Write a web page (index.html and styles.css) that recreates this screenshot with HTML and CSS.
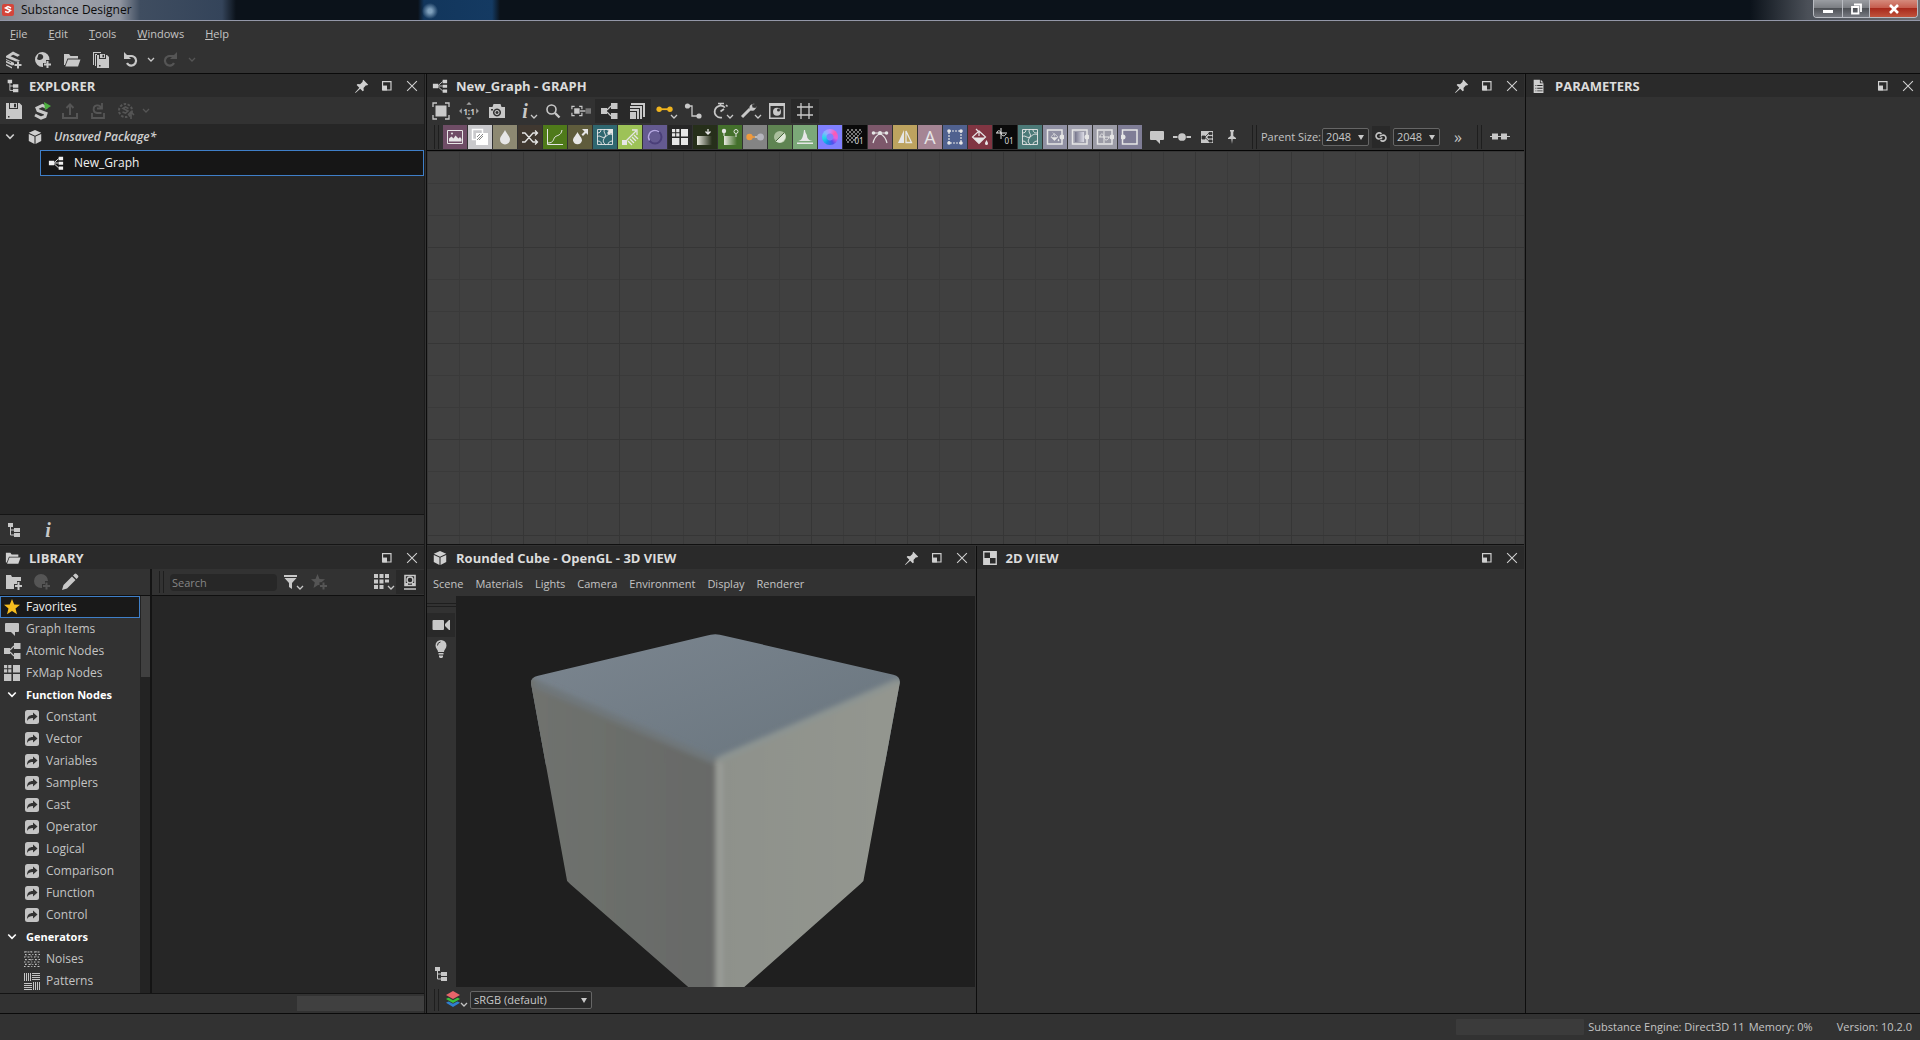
FILE: index.html
```html
<!DOCTYPE html>
<html lang="en">
<head>
<meta charset="utf-8">
<title>Substance Designer</title>
<link rel="stylesheet" href="styles.css">
</head>
<body>
<svg class="sprite" aria-hidden="true">
  <defs>
    <linearGradient id="g-dark"><stop offset="0" stop-color="#e8e8e0"/><stop offset="1" stop-color="#262f1a"/></linearGradient>
    <linearGradient id="g-green"><stop offset="0" stop-color="#e8e8e0"/><stop offset="1" stop-color="#44702c"/></linearGradient>
    <linearGradient id="g-gray"><stop offset="0" stop-color="#77778c"/><stop offset="1" stop-color="#dcdce6"/></linearGradient>
    <pattern id="checks" width="4" height="4" patternUnits="userSpaceOnUse"><path d="M0 0h2v2H0zM2 2h2v2H2z" fill="#777"/></pattern>
  </defs>
  <symbol id="i-chev" viewBox="0 0 8 8"><path d="M1 2l3 3 3-3" fill="none" stroke="currentColor" stroke-width="1.3"/></symbol>
  <symbol id="i-s" viewBox="0 0 18 18"><path d="M14.500 6L9.500 3.500 4 6l1 2.500 8 3-1 3-4 1.500-6-3" fill="none" stroke="currentColor" stroke-width="3"/></symbol>
  <symbol id="i-newsub" viewBox="0 0 18 18"><path d="M1 5l7-4.500L15 4l-2.500 1.700-4.300-2L5.500 5.300l9.500 4.200-1 .8-3 .2-10-4zM1 8l8 3.700V14l-2 .5L1 11.500v-1.700l5 2.200v-.8L1 9zM1 13l6 3v1.500L1 14.500z" fill="currentColor"/><path d="M13 10.500v7M9.500 14h7" stroke="currentColor" stroke-width="2"/></symbol>
  <symbol id="i-newres" viewBox="0 0 18 18"><path d="M8.500 1a7.500 7.500 0 1 0 0 15h.5v-4h3V9h3.500A7.500 7.500 0 0 0 8.500 1zM4.500 3.200a3.500 3 0 1 1 1.500 5.800 3.500 3.500 0 0 1-3-1z" fill="currentColor" fill-rule="evenodd"/><path d="M13.500 10v7M10 13.500h7" stroke="currentColor" stroke-width="2"/></symbol>
  <symbol id="i-newfilter" viewBox="0 0 18 18"><path d="M8 1a7 7 0 1 0 0 14h1v-4h3V8h3A7 7 0 0 0 8 1z" fill="currentColor"/><path d="M13.500 9.500v7M10 13h7" stroke="currentColor" stroke-width="2"/></symbol>
  <symbol id="i-folder" viewBox="0 0 18 18"><path d="M1 3h5l1.500 2H15v2.500H4.500L2 14H1z" fill="currentColor"/><path d="M5 8.500h12.500L15 15.500H2.300z" fill="currentColor"/></symbol>
  <symbol id="i-save" viewBox="0 0 18 18"><path d="M1 1h3v6h9V1h1.500L17 3.500V17H1zM3 14v1.500h1.500V14z" fill="currentColor" fill-rule="evenodd"/><path d="M5 1h7v5H5zm4 .8v3.400h2V1.800z" fill="currentColor" fill-rule="evenodd"/></symbol>
  <symbol id="i-saveall" viewBox="0 0 18 18"><path d="M1 1h8v1H2v12H1zM3 3h2v1H4v11H3z" fill="currentColor"/><path d="M5 4h2v4h7V4h1l2 2v11H5zM7 14h1.500v1.500H7z" fill="currentColor" fill-rule="evenodd"/><path d="M8 3h5v4H8zm2.500.8v2.400h1.500V3.800z" fill="currentColor" fill-rule="evenodd"/></symbol>
  <symbol id="i-undo" viewBox="0 0 18 18"><path d="M6 5h4.500a4.800 4.800 0 1 1-4.500 7" fill="none" stroke="currentColor" stroke-width="2.200"/><path d="M3 1v7h7L7.500 5.500z" fill="currentColor"/></symbol>
  <symbol id="i-tree" viewBox="0 0 18 18"><path d="M3 2h5v4H3zM9 7h6v4H9zM9 12h6v4H9z" fill="currentColor"/><path d="M5.500 5v9H10M5.500 9H10" fill="none" stroke="currentColor"/></symbol>
  <symbol id="i-pin" viewBox="0 0 18 18"><path d="M10.500 2L16 7.500l-1.500 1-1-.3-2.800 3 .3 2.800-1.200 1L7 12l-5 4.500L1 17l.5-1L6 11 3 8l1-1.200 2.800.3 3-2.800-.3-1z" fill="currentColor"/></symbol>
  <symbol id="i-float" viewBox="0 0 18 18"><path d="M4 4h9.500v9.500H4z" fill="none" stroke="currentColor" stroke-width="1.300"/><path d="M4 8.500h5V14H4z" fill="currentColor"/></symbol>
  <symbol id="i-close" viewBox="0 0 18 18"><path d="M3.500 3.500l11 11M14.500 3.500l-11 11" stroke="currentColor" stroke-width="1.200"/></symbol>
  <symbol id="i-export" viewBox="0 0 18 18"><path d="M2 11v5h14v-5M9 13V3M5.500 6L9 2.500 12.500 6" fill="none" stroke="currentColor" stroke-width="2"/></symbol>
  <symbol id="i-reload" viewBox="0 0 18 18"><path d="M3 11v5h12v-5M12.500 11H8a3.800 3.800 0 1 1 4-5M13 1v5.500H8" fill="none" stroke="currentColor" stroke-width="1.800"/></symbol>
  <symbol id="i-gear" viewBox="0 0 18 18"><circle cx="8.500" cy="8.500" r="6.500" fill="none" stroke="currentColor" stroke-width="2" stroke-dasharray="2.500 1.500"/><path d="M11.500 6.500L8.500 5 6 6.500l5 2.500-2.500 2L5.500 10M14 10v7M11 13l3-3 3 3" fill="none" stroke="currentColor" stroke-width="1.600"/></symbol>
  <symbol id="i-cube" viewBox="0 0 18 18"><path d="M9 1l7 3.200L9 7.500 2 4.200zM2 5.500l6.400 3V17L2 13.500zM16 5.500l-6.400 3V17l6.400-3.500z" fill="currentColor"/></symbol>
  <symbol id="i-graph" viewBox="0 0 18 18"><path d="M1 6.500h6v5H1zM12 2h5v4h-5zM12 7.500h5v3.500h-5zM12 13h5v3.500h-5z" fill="currentColor"/><path d="M12 4L7 8.500M7 9h5M7 10l5 4.500" stroke="currentColor"/></symbol>
  <symbol id="i-nodes" viewBox="0 0 18 18"><path d="M1 6h6v6H1zM11 1h6.500v6H11zM11 11h6.500v6H11z" fill="currentColor"/><path d="M11 4L7 8M7 10l4 4" stroke="currentColor" stroke-width="1.200"/></symbol>
  <symbol id="i-doc" viewBox="0 0 18 18"><path d="M3 2h7v4h4v11H3zM5 8v1h1V8zM7 8v1h6V8zM5 11v1h1v-1zM7 11v1h6v-1zM5 14v1h1v-1zM7 14v1h6v-1z" fill="currentColor" fill-rule="evenodd"/><path d="M11 2l3 3h-3z" fill="currentColor"/></symbol>
  <symbol id="i-check2d" viewBox="0 0 18 18"><path d="M2 2h14v14H2z" fill="none" stroke="currentColor" stroke-width="1.500"/><path d="M9 2h7v7H9zM2 9h7v7H2z" fill="currentColor"/></symbol>
  <symbol id="i-fit" viewBox="0 0 18 18"><path d="M3.500 3.500h11v11h-11z" fill="currentColor"/><path d="M1 5V1h4M13 1h4v4M17 13v4h-4M5 17H1v-4" fill="none" stroke="currentColor" stroke-width="1.300"/></symbol>
  <symbol id="i-cam" viewBox="0 0 18 18"><path d="M5.500 2h7l1 3H17v11H1V5h3.500zM3 7v1.500h2V7zM9 6.500a4 4 0 1 0 .01 0zM9 8a2.500 2.500 0 1 1-.01 0zM9 9a1.500 1.500 0 1 0 .01 0z" fill="currentColor" fill-rule="evenodd"/></symbol>
  <symbol id="i-zoom" viewBox="0 0 18 18"><circle cx="7.500" cy="7.500" r="4.500" fill="none" stroke="currentColor" stroke-width="1.600"/><path d="M11 11l4.500 4.500" stroke="currentColor" stroke-width="2.400"/></symbol>
  <symbol id="i-link" viewBox="0 0 22 18"><path d="M4 4H1v3M1 11v3h3M9 4h3v3M12 11v3H9" fill="none" stroke="currentColor" stroke-width="1.300"/><path d="M3.500 6h6v6h-6z" fill="currentColor"/><path d="M10 9h6" stroke="currentColor" stroke-width="1.500"/><path d="M16 6h6v6h-6z" fill="#777"/></symbol>
  <symbol id="i-stack" viewBox="0 0 18 18"><path d="M3 1h14v14h-2V3H3zM2 4h12v13h-2V6H2zM2 7h9v10H9V9H2zM2 10h6v7H2z" fill="currentColor"/></symbol>
  <symbol id="i-wire" viewBox="0 0 20 18"><path d="M3 7h14" stroke="#f0b41e" stroke-width="2"/><circle cx="3.500" cy="7" r="3" fill="#f0b41e"/><circle cx="15.500" cy="7" r="3" fill="#f0b41e"/></symbol>
  <symbol id="i-elbow" viewBox="0 0 18 18"><path d="M3 4h5v10h7" fill="none" stroke="currentColor" stroke-width="1.300"/><circle cx="3.500" cy="4" r="2.600" fill="currentColor"/><circle cx="15" cy="14" r="2.600" fill="currentColor"/></symbol>
  <symbol id="i-timer" viewBox="0 0 18 18"><path d="M13 5.500A6 6 0 1 0 10 15.500M6 1.500h6M8.500 2v2M14 3l1.500 1.500M8.500 9.500L12 7" fill="none" stroke="currentColor" stroke-width="1.700"/></symbol>
  <symbol id="i-wrench" viewBox="0 0 18 18"><path d="M2 15l8-8" stroke="currentColor" stroke-width="3"/><path d="M15 2l-3 .5.500 3 3 .5 1-2a4.500 4.500 0 0 1-7 4 4.500 4.500 0 0 1 5.500-6z" fill="currentColor"/></symbol>
  <symbol id="i-preview" viewBox="0 0 18 18"><path d="M1 1h16v16H1zM2.500 4v11.500h13V4z" fill="currentColor" fill-rule="evenodd"/><circle cx="9" cy="9.800" r="4" fill="currentColor"/><circle cx="10.500" cy="8" r="1.500" fill="#323232"/></symbol>
  <symbol id="i-grid" viewBox="0 0 18 18"><path d="M5 1v16M13 1v16M1 5h16M1 13h16" stroke="currentColor" stroke-width="1.300"/></symbol>
  <symbol id="i-img" viewBox="0 0 18 18"><path d="M1.500 2.500h15v13h-15z" fill="none" stroke="currentColor"/><path d="M3 13.500v-3l2.500-2 2 2 2-3 3 3 1.500-1.500 1.500 2v2.500z" fill="currentColor"/><circle cx="6" cy="5.500" r="1" fill="currentColor"/></symbol>
  <symbol id="i-blend" viewBox="0 0 18 18"><path d="M1.500 1.500h10v10h-10z" fill="none" stroke="#fff" stroke-width="1.500"/><path d="M5 5h12v12H5z" fill="#fff"/><path d="M6 9l3-3M6 12l6-6M8 12l4-4" stroke="#888"/></symbol>
  <symbol id="i-drop" viewBox="0 0 18 18"><path d="M9 2c2 4 5 6.500 5 9.500a5 5 0 0 1-10 0C4 8.500 7 6 9 2z" fill="currentColor"/></symbol>
  <symbol id="i-shuffle" viewBox="0 0 18 18"><path d="M1 5h3l8 9h4M1 14h3l8-9h4M14 2.500L16.500 5 14 7.500M14 11.500l2.500 2.500-2.500 2.500" fill="none" stroke="currentColor" stroke-width="1.300"/></symbol>
  <symbol id="i-curve" viewBox="0 0 18 18"><path d="M1.500 1v15.500H17M2 15c6 0 5-4 7-6s6-1 7-7" fill="none" stroke="currentColor"/></symbol>
  <symbol id="i-dropdir" viewBox="0 0 18 18"><path d="M6.500 4c2 4 4.500 5.500 4.500 8.500a4.600 4.600 0 0 1-9 0c0-3 2.500-4.500 4.500-8.500zM11 1h6v6l-2-2-3 3-1.500-1.500 3-3z" fill="currentColor"/></symbol>
  <symbol id="i-warp" viewBox="0 0 18 18"><path d="M1.500 1.500h15v15h-15zM1 9c3-3 5 2 8 0s4-4 8-2M9 1c-3 3 2 5 0 8s-3 5 1 8M1 5c3 0 4-1 4-4M5 17c1-3-1-4-4-4M12 17c0-3 2-4 5-4M12 1c0 3 1 4 5 4" fill="none" stroke="currentColor" stroke-width=".9"/></symbol>
  <symbol id="i-arrowne" viewBox="0 0 18 18"><path d="M11 1h6v6l-2-2-2 2-2-2 2-2z" fill="currentColor"/></symbol>
  <symbol id="i-dist" viewBox="0 0 18 18"><path d="M2 16L15 3M11 2h5v5M7 13l4 4M9 11l4 4M11 9l4 4M13 7l4 4" fill="none" stroke="currentColor" stroke-width="1.300"/><path d="M1 12h5v5H1z" fill="currentColor"/></symbol>
  <symbol id="i-ring" viewBox="0 0 18 18"><circle cx="9" cy="9" r="6.500" fill="none" stroke="#4a3f78" stroke-width="2"/><path d="M3.500 12.500A6.500 6.500 0 0 1 9 2.500a6.500 6.500 0 0 1 4 1.400" fill="none" stroke="#b5a8e0" stroke-width="1.500"/></symbol>
  <symbol id="i-fx" viewBox="0 0 18 18"><path d="M1 1h3.200v3.200H1zM5.200 1h3.200v3.200H5.200zM1 5.200h3.200v3.200H1zM5.200 5.200h3.200v3.200H5.200zM10 1h7v7.400h-7zM1 10h7.400v7H1zM10 10h7v7h-7z" fill="currentColor"/></symbol>
  <symbol id="i-grad" viewBox="0 0 18 18"><path d="M1 8h15v9H1z" fill="url(#g-dark)"/><path d="M12 1v5M9.500 3.500L12 6l2.500-2.500" fill="none" stroke="currentColor" stroke-width="1.300"/></symbol>
  <symbol id="i-graddyn" viewBox="0 0 18 18"><path d="M3 8h13v9H3z" fill="url(#g-green)"/><circle cx="3" cy="3" r="2.200" fill="currentColor"/><path d="M3 4v4M15 6v3" stroke="currentColor"/><circle cx="15" cy="3.500" r="2" fill="none" stroke="currentColor"/></symbol>
  <symbol id="i-swap" viewBox="0 0 18 18"><path d="M4 9h5" stroke="#f09a3c" stroke-width="1.500"/><path d="M9 9h5" stroke="#ccc" stroke-width="1.500"/><circle cx="3.500" cy="9" r="3.200" fill="#f09a3c"/><circle cx="14.500" cy="9" r="3.500" fill="#b4b4bc"/></symbol>
  <symbol id="i-half" viewBox="0 0 18 18"><circle cx="9" cy="9" r="6" fill="#aabf9c"/><path d="M4.800 13.200A6 6 0 0 0 13.200 4.800z" fill="#dfe8d8"/><path d="M13.200 4.800L4.800 13.200" stroke="#47663c"/></symbol>
  <symbol id="i-hist" viewBox="0 0 18 18"><path d="M1 13c4 0 6-2 7-11h1c0 3 2 4 2 6s2 5 6 5zM1 14.500h16V16H1z" fill="currentColor"/></symbol>
  <symbol id="i-bez" viewBox="0 0 18 18"><path d="M2 5h14M2 15c1-4 4-8 7-9.500M16 15c-1-4-4-8-7-9.500" fill="none" stroke="currentColor" stroke-width="1.200"/><circle cx="2.500" cy="5" r="1.800" fill="currentColor"/><circle cx="15.500" cy="5" r="1.800" fill="currentColor"/><circle cx="9" cy="5" r="2" fill="currentColor"/></symbol>
  <symbol id="i-mirror" viewBox="0 0 18 18"><path d="M8 2v13H2z" fill="currentColor"/><path d="M10 3v11.500h5.500z" fill="none" stroke="currentColor" stroke-width="1.300"/></symbol>
  <symbol id="i-xform" viewBox="0 0 18 18"><path d="M3 3h12v12H3z" fill="none" stroke="currentColor" stroke-width="1.200" stroke-dasharray="2 1"/><g fill="currentColor"><circle cx="3" cy="3" r="1.800"/><circle cx="15" cy="3" r="1.800"/><circle cx="3" cy="15" r="1.800"/><circle cx="15" cy="15" r="1.800"/></g></symbol>
  <symbol id="i-fill" viewBox="0 0 18 18"><path d="M8 3l6.500 6L8 15.500 1.500 9zM5 1l3 3v4" fill="none" stroke="currentColor" stroke-width="1.200"/><path d="M2 9.500h12L8 15.500zM15.500 12c1 2 1.500 2.500 1.500 3.500a1.500 1.500 0 0 1-3 0c0-1 .5-1.500 1.500-3.500z" fill="currentColor"/></symbol>
  <symbol id="i-frame" viewBox="0 0 18 18"><path d="M1.500 2h14.500v14H1.500z" fill="none" stroke="currentColor" stroke-width="1.500"/></symbol>
  <symbol id="i-note" viewBox="0 0 18 18"><path d="M3 3h12a1 1 0 0 1 1 1v7a1 1 0 0 1-1 1h-3v4l-4-4H3a1 1 0 0 1-1-1V4a1 1 0 0 1 1-1z" fill="currentColor"/></symbol>
  <symbol id="i-dot" viewBox="0 0 20 18"><path d="M0 9h5M15 9h5" stroke="currentColor" stroke-width="2"/><circle cx="10" cy="9" r="4.300" fill="currentColor"/></symbol>
  <symbol id="i-frag" viewBox="0 0 18 18"><path d="M3 3h12v12H3z" fill="currentColor"/><path d="M4 8h3v3H4zM11 4.500h3v2h-3zM10 8.500h4v1.500h-4zM11 12h3v2h-3zM7 9l4-4M7 9.500l4 3.500" fill="#323232" stroke="#323232" stroke-width=".8"/></symbol>
  <symbol id="i-tack" viewBox="0 0 18 18"><path d="M7 2h4v1l-.7 1v4l2.700 2v1H9.700L9 16l-.7-5H5v-1l2.700-2V4L7 3z" fill="currentColor"/></symbol>
  <symbol id="i-chain" viewBox="0 0 18 18"><path d="M9.500 5.500a3.500 3.500 0 1 0-3 5.800c2 0 2.500-1.300 4-1.300M8.500 12.500a3.500 3.500 0 1 0 3-5.800c-2 0-2.500 1.300-4 1.300" fill="none" stroke="currentColor" stroke-width="1.800"/></symbol>
  <symbol id="i-align" viewBox="0 0 20 18"><path d="M0 8.500h20" stroke="currentColor"/><path d="M2 5.500h6v6H2zM11 5.500h6v6h-6z" fill="currentColor"/></symbol>
  <symbol id="i-addfolder" viewBox="0 0 18 18"><path d="M1 2h5l1 2h9v4h-4v3H9v5H1z" fill="currentColor"/><path d="M13.500 9v8M10 13h7" stroke="currentColor" stroke-width="2"/></symbol>
  <symbol id="i-pencil" viewBox="0 0 18 18"><path d="M1 17l1.500-5L11 3.500 14.500 7 6 15.500zM12 2.500l1.500-1.500a1.500 1.500 0 0 1 2 0L17 2.500a1.500 1.500 0 0 1 0 2L15.500 6z" fill="currentColor"/></symbol>
  <symbol id="i-filter" viewBox="0 0 18 18"><path d="M2 2h13v2H2zM2.500 5h12L10 10v6l-3-2v-4z" fill="currentColor"/></symbol>
  <symbol id="i-star" viewBox="0 0 18 18"><path d="M9 1l2.200 5.500 5.800.3-4.500 3.700 1.500 5.800L9 13l-5 3.300 1.500-5.800L1 6.800l5.800-.3z" fill="currentColor"/></symbol>
  <symbol id="i-staradd" viewBox="0 0 18 18"><path d="M7.500 1l2 5 5.500.3-3.500 3H9.500v3L8 12l-4.500 3 1.300-5.500L1 6.300 5.500 6z" fill="currentColor"/><path d="M13.500 9.500v7M10 13h7" stroke="currentColor" stroke-width="2"/></symbol>
  <symbol id="i-thumbs" viewBox="0 0 18 18"><path d="M1 1h4v4H1zM6.500 1h4v4h-4zM12 1h4v4h-4zM1 6.500h4v4H1zM6.500 6.500h4v4h-4zM12 6.500h4v3h-4zM1 12h4v4H1zM6.500 12h4v4h-4z" fill="currentColor"/></symbol>
  <symbol id="i-monitor" viewBox="0 0 18 18"><path d="M4 2.500h10v10H4zM3 16h12" fill="none" stroke="currentColor" stroke-width="1.600"/><circle cx="9" cy="7" r="3" fill="none" stroke="currentColor" stroke-width="1.500"/><path d="M4 10h3v2.500H4zM11 10h3v2.500h-3z" fill="currentColor"/></symbol>
  <symbol id="i-fn" viewBox="0 0 18 18"><rect x="2" y="2" width="14" height="14" rx="2.500" fill="currentColor"/><path d="M4 13c0-4 2-6 6-6V4.500l4.500 4-4.500 4V10c-3 0-4.500.8-6 3z" fill="#323232"/></symbol>
  <symbol id="i-noise" viewBox="0 0 18 18"><path d="M1 2h16M2 4.500h15M1 7h15M2 9.500h15M1 12h16M2 14.500h14M1 16.500h16" stroke="currentColor" stroke-width="1.200" stroke-dasharray="1.500 2 2 1.800 1 1.700"/><path d="M3 1v16M8 1v16M13 1v16" stroke="currentColor" stroke-dasharray="1.500 3 1 2.500"/></symbol>
  <symbol id="i-pattern" viewBox="0 0 18 18"><path d="M1 1h1v8H1zM3 1h1v8H3zM5 1h1v8H5zM7 1h1v8H7zM10 10h1v8h-1zM12 10h1v8h-1zM14 10h1v8h-1zM16 10h1v8h-1zM9 1h8v1H9zM9 3h8v1H9zM9 5h8v1H9zM9 7h8v1H9zM1 11h8v1H1zM1 13h8v1H1zM1 15h8v1H1zM1 17h8v1H1z" fill="currentColor"/></symbol>
  <symbol id="i-video" viewBox="0 0 18 18"><path d="M1.500 4h9.500a1 1 0 0 1 1 1v8a1 1 0 0 1-1 1H1.500a1 1 0 0 1-1-1V5a1 1 0 0 1 1-1zM13 8l4-4h1v10h-1l-4-4z" fill="currentColor"/></symbol>
  <symbol id="i-bulb" viewBox="0 0 18 18"><path d="M9 0a5.500 5.500 0 0 1 5.500 5.500c0 3-2.500 4-2.500 6.500H6c0-2.500-2.500-3.500-2.500-6.500A5.500 5.500 0 0 1 9 0zM6.500 13h5v1.500h-5zM7 15.500h4V17L10 18H8l-1-1z" fill="currentColor"/><path d="M5.500 5.500A3.500 3.500 0 0 1 8.500 2" fill="none" stroke="#323232"/></symbol>
  <symbol id="i-layers" viewBox="0 0 16 18"><path d="M8 8l7 3.800-7 4.200-7-4.200z" fill="#2f7fd0"/><path d="M8 4.500l8 4-8 4.300L0 8.500z" fill="#323232"/><path d="M8 4l7 4-7 4-7-4z" fill="#3cc23c"/><path d="M8 0l8 4.700-8 4.500L0 4.700z" fill="#323232"/><path d="M8 0l7 4-7 4-7-4z" fill="#e8646a"/></symbol>
</svg>

<header class="titlebar">
  <svg class="logo" viewBox="0 0 12 12"><rect width="12" height="12" rx="2" fill="#d4453a"/><path d="M9 4L6 2.500 3.500 4l5 2.500-2.500 2L3 7.500" fill="none" stroke="#fff" stroke-width="1.500"/></svg>
  <h1 class="app-name">Substance Designer</h1>
  <div class="win-buttons">
    <button class="win win-min" aria-label="Minimize"><svg viewBox="0 0 12 12"><path d="M1 7h10v3H1z" fill="#fff"/></svg></button>
    <button class="win win-max" aria-label="Restore"><svg viewBox="0 0 12 12"><path d="M4 1.500h7V9M2 4h6.500v6.500H2z" fill="none" stroke="#fff" stroke-width="1.800"/></svg></button>
    <button class="win win-close" aria-label="Close window"><svg viewBox="0 0 12 12"><path d="M2 2l8 8M10 2l-8 8" stroke="#fff" stroke-width="2.600"/></svg></button>
  </div>
</header>

<nav class="menubar">
  <button><u>F</u>ile</button><button><u>E</u>dit</button><button><u>T</u>ools</button><button><u>W</u>indows</button><button><u>H</u>elp</button>
</nav>
<div class="toolbar main-tools">
  <button class="tb" aria-label="New graph"><svg><use href="#i-newsub"/></svg></button>
  <button class="tb" aria-label="New resource"><svg><use href="#i-newres"/></svg></button>
  <button class="tb" aria-label="Open"><svg><use href="#i-folder"/></svg></button>
  <button class="tb" aria-label="Save all"><svg><use href="#i-saveall"/></svg></button>
  <button class="tb" aria-label="Undo"><svg><use href="#i-undo"/></svg></button>
  <button class="tb slim" aria-label="Undo history"><svg><use href="#i-chev"/></svg></button>
  <button class="tb off" aria-label="Redo" disabled><svg class="flip"><use href="#i-undo"/></svg></button>
  <button class="tb slim off" aria-label="Redo history" disabled><svg><use href="#i-chev"/></svg></button>
</div>

<main class="workspace">
  <div class="column left">
    <section class="dock explorer">
      <header class="dock-head">
        <svg><use href="#i-tree"/></svg><h2>EXPLORER</h2>
        <button class="hb" aria-label="Pin"><svg><use href="#i-pin"/></svg></button><button class="hb" aria-label="Float"><svg><use href="#i-float"/></svg></button><button class="hb" aria-label="Close"><svg><use href="#i-close"/></svg></button>
      </header>
      <div class="toolbar">
        <button class="tb" aria-label="Save"><svg><use href="#i-save"/></svg></button>
        <button class="tb" aria-label="Publish"><svg viewBox="0 0 18 18"><use href="#i-s"/><path d="M11 0l7 4-6 4z" fill="#4caf3f"/></svg></button>
        <button class="tb off" aria-label="Export" disabled><svg><use href="#i-export"/></svg></button>
        <button class="tb off" aria-label="Re-export" disabled><svg><use href="#i-reload"/></svg></button>
        <button class="tb off" aria-label="Bake" disabled><svg><use href="#i-gear"/></svg></button>
        <button class="tb slim off" aria-label="More" disabled><svg><use href="#i-chev"/></svg></button>
      </div>
      <ul class="tree">
        <li class="package"><svg class="chev"><use href="#i-chev"/></svg><svg class="ico"><use href="#i-cube"/></svg><span>Unsaved Package*</span></li>
        <li class="graph-item"><svg class="ico"><use href="#i-graph"/></svg><span>New_Graph</span></li>
      </ul>
      <div class="tree-foot">
        <button class="tb" aria-label="Tree"><svg><use href="#i-tree"/></svg></button>
        <button class="tb info" aria-label="Information">i</button>
      </div>
    </section>

    <section class="dock library">
      <header class="dock-head">
        <svg><use href="#i-folder"/></svg><h2>LIBRARY</h2>
        <button class="hb" aria-label="Float"><svg><use href="#i-float"/></svg></button><button class="hb" aria-label="Close"><svg><use href="#i-close"/></svg></button>
      </header>
      <div class="lib-body">
        <div class="lib-side">
          <div class="toolbar lined">
            <button class="tb" aria-label="Add folder"><svg><use href="#i-addfolder"/></svg></button>
            <button class="tb off" aria-label="Add filter" disabled><svg><use href="#i-newfilter"/></svg></button>
            <button class="tb" aria-label="Edit"><svg><use href="#i-pencil"/></svg></button>
          </div>
          <div class="lib-scroll">
            <ul class="lib-list">
              <li class="selected"><svg class="gold"><use href="#i-star"/></svg>Favorites</li>
              <li><svg><use href="#i-note"/></svg>Graph Items</li>
              <li><svg><use href="#i-nodes"/></svg>Atomic Nodes</li>
              <li><svg><use href="#i-fx"/></svg>FxMap Nodes</li>
              <li class="group"><svg><use href="#i-chev"/></svg>Function Nodes</li>
              <li class="child"><svg><use href="#i-fn"/></svg>Constant</li>
              <li class="child"><svg><use href="#i-fn"/></svg>Vector</li>
              <li class="child"><svg><use href="#i-fn"/></svg>Variables</li>
              <li class="child"><svg><use href="#i-fn"/></svg>Samplers</li>
              <li class="child"><svg><use href="#i-fn"/></svg>Cast</li>
              <li class="child"><svg><use href="#i-fn"/></svg>Operator</li>
              <li class="child"><svg><use href="#i-fn"/></svg>Logical</li>
              <li class="child"><svg><use href="#i-fn"/></svg>Comparison</li>
              <li class="child"><svg><use href="#i-fn"/></svg>Function</li>
              <li class="child"><svg><use href="#i-fn"/></svg>Control</li>
              <li class="group"><svg><use href="#i-chev"/></svg>Generators</li>
              <li class="child"><svg><use href="#i-noise"/></svg>Noises</li>
              <li class="child"><svg><use href="#i-pattern"/></svg>Patterns</li>
            </ul>
            <div class="vscroll"><div class="vthumb"></div></div>
          </div>
        </div>
        <div class="lib-main">
          <div class="toolbar lined">
            <span class="grip"></span>
            <input class="search" type="text" placeholder="Search" aria-label="Search">
            <button class="tb" aria-label="Filter"><svg><use href="#i-filter"/></svg><svg class="sub"><use href="#i-chev"/></svg></button>
            <button class="tb off" aria-label="Add favorite" disabled><svg><use href="#i-staradd"/></svg></button>
            <span class="spacer"></span>
            <button class="tb" aria-label="Thumbnails"><svg><use href="#i-thumbs"/></svg><svg class="sub"><use href="#i-chev"/></svg></button>
            <button class="tb on" aria-label="Preview"><svg><use href="#i-monitor"/></svg></button>
          </div>
          <div class="lib-content"></div>
        </div>
      </div>
      <div class="hscroll"><div class="hthumb"></div></div>
    </section>
  </div>

  <div class="column center">
    <section class="dock graph">
      <header class="dock-head">
        <svg><use href="#i-graph"/></svg><h2>New_Graph - GRAPH</h2>
        <button class="hb" aria-label="Pin"><svg><use href="#i-pin"/></svg></button><button class="hb" aria-label="Float"><svg><use href="#i-float"/></svg></button><button class="hb" aria-label="Close"><svg><use href="#i-close"/></svg></button>
      </header>
      <div class="toolbar">
        <button class="tb" aria-label="Fit"><svg><use href="#i-fit"/></svg></button>
        <button class="tb wide" aria-label="Actual size"><svg viewBox="0 0 22 20"><path d="M11 0l3 3H8zM11 20l3-3H8zM0 10l3-3v6zM22 10l-3-3v6z" fill="currentColor" opacity=".75"/><text x="11" y="14" class="t-one">1:1</text></svg></button>
        <button class="tb" aria-label="Snapshot"><svg><use href="#i-cam"/></svg></button>
        <button class="tb info" aria-label="Information">i<svg class="sub"><use href="#i-chev"/></svg></button>
        <button class="tb" aria-label="Find"><svg><use href="#i-zoom"/></svg></button>
        <button class="tb wide" aria-label="Connection"><svg><use href="#i-link"/></svg></button>
        <button class="tb on" aria-label="Nodes"><svg><use href="#i-nodes"/></svg></button>
        <button class="tb on" aria-label="Stack"><svg><use href="#i-stack"/></svg></button>
        <button class="tb" aria-label="Link mode"><svg><use href="#i-wire"/></svg><svg class="sub"><use href="#i-chev"/></svg></button>
        <button class="tb" aria-label="Link shape"><svg><use href="#i-elbow"/></svg></button>
        <button class="tb" aria-label="Timings"><svg><use href="#i-timer"/></svg><svg class="sub"><use href="#i-chev"/></svg></button>
        <button class="tb" aria-label="Tools"><svg><use href="#i-wrench"/></svg><svg class="sub"><use href="#i-chev"/></svg></button>
        <button class="tb" aria-label="Preview"><svg><use href="#i-preview"/></svg></button>
        <button class="tb on" aria-label="Grid"><svg><use href="#i-grid"/></svg></button>
      </div>
      <div class="nodebar">
        <span class="grip"></span>
        <button class="node n-bitmap" aria-label="Bitmap"><svg><use href="#i-img"/></svg></button>
        <button class="node n-blend" aria-label="Blend"><svg><use href="#i-blend"/></svg></button>
        <button class="node n-blur" aria-label="Blur"><svg><use href="#i-drop"/></svg></button>
        <button class="node n-shuffle" aria-label="Channels Shuffle"><svg><use href="#i-shuffle"/></svg></button>
        <button class="node n-curve" aria-label="Curve"><svg><use href="#i-curve"/></svg></button>
        <button class="node n-dblur" aria-label="Directional Blur"><svg><use href="#i-dropdir"/></svg></button>
        <button class="node n-dwarp" aria-label="Directional Warp"><svg viewBox="0 0 18 18"><use href="#i-warp"/><use href="#i-arrowne"/></svg></button>
        <button class="node n-dist" aria-label="Distance"><svg><use href="#i-dist"/></svg></button>
        <button class="node n-emboss" aria-label="Emboss"><svg><use href="#i-ring"/></svg></button>
        <button class="node n-fx" aria-label="FX-Map"><svg><use href="#i-fx"/></svg></button>
        <button class="node n-grad" aria-label="Gradient"><svg><use href="#i-grad"/></svg></button>
        <button class="node n-graddyn" aria-label="Gradient Dynamic"><svg><use href="#i-graddyn"/></svg></button>
        <button class="node n-gray" aria-label="Grayscale"><svg><use href="#i-swap"/></svg></button>
        <button class="node n-hsl" aria-label="HSL"><svg><use href="#i-half"/></svg></button>
        <button class="node n-levels" aria-label="Levels"><svg><use href="#i-hist"/></svg></button>
        <button class="node n-normal" aria-label="Normal"><span class="wheel"></span></button>
        <button class="node n-black" aria-label="Pixel Processor"><svg viewBox="0 0 20 20"><path d="M1 2h16v3L8 16H1z" fill="url(#checks)"/><text x="14" y="17" class="t-bin">01</text></svg></button>
        <button class="node n-svg" aria-label="SVG"><svg><use href="#i-bez"/></svg></button>
        <button class="node n-sharpen" aria-label="Sharpen"><svg><use href="#i-mirror"/></svg></button>
        <button class="node n-text" aria-label="Text">A</button>
        <button class="node n-xform" aria-label="Transformation 2D"><svg><use href="#i-xform"/></svg></button>
        <button class="node n-uniform" aria-label="Uniform Color"><svg><use href="#i-fill"/></svg></button>
        <button class="node n-black" aria-label="Value Processor"><svg viewBox="0 0 20 20"><path d="M6 1v11M1 6h11M2 6c0-3 3.500-3 4 0s3.500 4 5 1" fill="none" stroke="currentColor"/><text x="14" y="17" class="t-bin">01</text></svg></button>
        <button class="node n-warp" aria-label="Warp"><svg><use href="#i-warp"/></svg></button>
        <button class="node n-in1" aria-label="Input Color"><svg viewBox="0 0 18 18"><use href="#i-frame"/><g transform="translate(4 4) scale(.55)"><use href="#i-fill" width="18" height="18"/></g><circle cx="16" cy="9" r="2.500" fill="currentColor"/></svg></button>
        <button class="node n-in2" aria-label="Input Grayscale"><svg viewBox="0 0 18 18"><use href="#i-frame"/><path d="M4 4h9v10H4z" fill="url(#g-gray)"/><circle cx="16" cy="9" r="2.500" fill="currentColor"/></svg></button>
        <button class="node n-in3" aria-label="Input Value"><svg viewBox="0 0 18 18"><use href="#i-frame"/><path d="M8 3v12M3 9h10M4 9c0-4 3.500-4 4 0s4 4 5 0" fill="none" stroke="currentColor"/><circle cx="16" cy="9" r="2.500" fill="currentColor"/></svg></button>
        <button class="node n-out" aria-label="Output"><svg viewBox="0 0 18 18"><use href="#i-frame"/><circle cx="2" cy="9" r="2.500" fill="currentColor"/></svg></button>
        <button class="node plain" aria-label="Comment"><svg><use href="#i-note"/></svg></button>
        <button class="node plain" aria-label="Dot"><svg><use href="#i-dot"/></svg></button>
        <button class="node plain" aria-label="Frame"><svg><use href="#i-frag"/></svg></button>
        <button class="node plain" aria-label="Pin"><svg><use href="#i-tack"/></svg></button>
        <span class="grip"></span>
        <label class="size-label" for="size-w">Parent Size:</label>
        <span class="drop small"><select id="size-w"><option>2048</option></select></span>
        <button class="chain on" aria-label="Link sizes"><svg><use href="#i-chain"/></svg></button>
        <span class="drop small"><select aria-label="Parent height"><option>2048</option></select></span>
        <button class="more" aria-label="More">»</button>
        <span class="grip"></span>
        <button class="tb wide" aria-label="Align"><svg><use href="#i-align"/></svg></button>
      </div>
      <div class="canvas"></div>
    </section>

    <div class="views">
      <section class="dock view3d">
        <header class="dock-head">
          <svg><use href="#i-cube"/></svg><h2>Rounded Cube - OpenGL - 3D VIEW</h2>
          <button class="hb" aria-label="Pin"><svg><use href="#i-pin"/></svg></button><button class="hb" aria-label="Float"><svg><use href="#i-float"/></svg></button><button class="hb" aria-label="Close"><svg><use href="#i-close"/></svg></button>
        </header>
        <nav class="menu3d">
          <button>Scene</button><button>Materials</button><button>Lights</button><button>Camera</button><button>Environment</button><button>Display</button><button>Renderer</button>
        </nav>
        <div class="stage">
          <div class="strip">
            <span class="grip-h"></span>
            <button class="tb on" aria-label="Camera"><svg><use href="#i-video"/></svg></button>
            <button class="tb" aria-label="Light"><svg><use href="#i-bulb"/></svg></button>
            <span class="spacer"></span>
            <button class="tb" aria-label="Scene tree"><svg><use href="#i-tree"/></svg></button>
          </div>
          <div class="viewport">
            <svg viewBox="0 0 518 391" preserveAspectRatio="xMidYMid slice" role="img" aria-label="Rounded cube">
              <defs>
                <clipPath id="cube"><path d="M75 88Q74 82 82 80L250 40Q259 37 268 40L437 79Q445 81 443 89L407 285 404 288 288 391 260 417 232 391 114 288 111 285z"/></clipPath>
                <linearGradient id="c-top" x1="0" y1="0" x2="1" y2="1"><stop offset="0" stop-color="#7d8791"/><stop offset="1" stop-color="#68747d"/></linearGradient>
                <linearGradient id="c-left"><stop offset="0" stop-color="#70736f"/><stop offset="1" stop-color="#676967"/></linearGradient>
                <linearGradient id="c-right"><stop offset="0" stop-color="#8e918b"/><stop offset="1" stop-color="#949790"/></linearGradient>
                <filter id="soft"><feGaussianBlur stdDeviation="2.500"/></filter>
              </defs>
              <g clip-path="url(#cube)">
                <path d="M60 20h400v150H60z" fill="url(#c-top)"/>
                <g filter="url(#soft)">
                  <path d="M60 76l15 6L259 163V440H60z" fill="url(#c-left)"/>
                  <path d="M460 78l-16 7L259 163V440h201z" fill="url(#c-right)"/>
                  <path d="M78 88l180 77" stroke="#70777a" stroke-width="7" fill="none"/>
                  <path d="M443 85L262 164" stroke="#8d9492" stroke-width="6" fill="none"/>
                  <path d="M263 167v240" stroke="#9a9d98" stroke-width="7" fill="none"/>
                </g>
              </g>
            </svg>
          </div>
        </div>
        <div class="foot3d">
          <span class="grip"></span>
          <button class="layers" aria-label="Channels"><svg><use href="#i-layers"/></svg><svg class="sub"><use href="#i-chev"/></svg></button>
          <span class="drop large"><select aria-label="Color space"><option>sRGB (default)</option></select></span>
        </div>
      </section>
      <section class="dock view2d">
        <header class="dock-head">
          <svg><use href="#i-check2d"/></svg><h2>2D VIEW</h2>
          <button class="hb" aria-label="Float"><svg><use href="#i-float"/></svg></button><button class="hb" aria-label="Close"><svg><use href="#i-close"/></svg></button>
        </header>
      </section>
    </div>
  </div>

  <section class="dock params">
    <header class="dock-head">
      <svg><use href="#i-doc"/></svg><h2>PARAMETERS</h2>
      <button class="hb" aria-label="Float"><svg><use href="#i-float"/></svg></button><button class="hb" aria-label="Close"><svg><use href="#i-close"/></svg></button>
    </header>
  </section>
</main>

<footer class="statusbar">
  <div class="progress"></div>
  <span>Substance Engine: Direct3D 11</span><span>Memory: 0%</span><span class="version">Version: 10.2.0</span>
</footer>
</body>
</html>
```
FILE: styles.css
```css
* { box-sizing: border-box; }
html, body { height: 100%; }
body {
  margin: 0;
  display: flex;
  flex-direction: column;
  background: #323232;
  color: #c4c4c4;
  font: 12px/16px "Open Sans", "Noto Sans", sans-serif;
  overflow: hidden;
}
h1, h2, ul { margin: 0; padding: 0; list-style: none; }
button {
  margin: 0;
  padding: 0;
  border: 0;
  background: none;
  color: inherit;
  font: inherit;
  display: flex;
  align-items: center;
  justify-content: center;
  flex: none;
}
svg { flex: none; width: 18px; height: 18px; display: block; }
.sprite { position: absolute; width: 0; height: 0; }
.spacer { flex: 1; }
.t-one { font: bold 9px "Noto Sans", sans-serif; fill: currentColor; text-anchor: middle; }
.t-bin { font: 8px "Noto Sans", sans-serif; fill: #ddd; text-anchor: middle; }

/* window frame */
.titlebar {
  flex: none;
  height: 21px;
  display: flex;
  align-items: center;
  padding-left: 2px;
  border-bottom: 1px solid #9397a8;
  background:
    radial-gradient(circle at 430px 11px, #7fa0bc 2px, transparent 8px),
    linear-gradient(90deg, transparent 418px, #12365c 424px, #143a62 492px, transparent 500px),
    linear-gradient(90deg, #85878f 0, #a3a6ae 60px, #8f949f 120px, #3f4d60 140px, #34445a 222px, #0b121a 236px, #0b121a calc(100% - 170px), #4b5058 calc(100% - 112px), #6a6d72 100%);
}
.logo { width: 12px; height: 12px; }
.app-name { margin-left: 7px; font-size: 11px; font-weight: 400; color: #0c0c0c; }
.win-buttons {
  margin: 0 2px 0 auto;
  align-self: flex-start;
  display: flex;
  border: 1px solid #b9bcc2;
  border-top: 0;
  border-radius: 0 0 4px 4px;
  overflow: hidden;
}
.win { height: 17px; background: linear-gradient(#9a9da2, #787b80 50%, #4e5156 50%, #767980); }
.win svg { width: 12px; height: 12px; }
.win-min { width: 28px; }
.win-max { width: 27px; border-left: 1px solid #b9bcc2; }
.win-close { width: 48px; border-left: 1px solid #b9bcc2; background: linear-gradient(#d58a7c, #c4594a 50%, #a82a1c 50%, #c0533c); }
.app-name { font-size: 12px; }

.menubar { flex: none; display: flex; gap: 21px; height: 26px; padding-left: 10px; font-size: 11px; }
.toolbar { flex: none; display: flex; align-items: center; height: 27px; background: #323232; }
.main-tools { height: 26px; gap: 1px; }
.tb { position: relative; width: 28px; height: 24px; color: #c8c8c8; }
.tb.slim svg { width: 8px; height: 8px; }
.tb.slim { width: 11px; }
.tb.wide svg { width: 20px; height: 18px; }
.tb.off { color: #555; }
.on { background: #292929; }
.flip { transform: scaleX(-1); }
.sub { position: absolute; right: 1px; bottom: 2px; width: 8px; height: 8px; }
.info { font: italic bold 20px/24px "Liberation Serif", serif; }
.grip { flex: none; width: 5px; align-self: stretch; border: solid #1e1e1e; border-width: 0 1px; margin: 2px 6px 2px 7px; }

/* docks */
.workspace {
  flex: 1;
  min-height: 0;
  display: grid;
  grid-template-columns: 425px minmax(0, 1fr) 394px;
  gap: 2px;
  border: solid #0a0a0a;
  border-width: 1px 0;
}
.column { min-height: 0; display: grid; grid-template-rows: minmax(0, 101fr) minmax(0, 100fr); gap: 1px; }
.center, .params { box-shadow: -1px 0 #0d0d0d; }
.left { border-right: 1px solid #1c1c1c; }
.dock { display: flex; flex-direction: column; min-width: 0; min-height: 0; }
.dock-head { flex: none; display: flex; align-items: center; height: 23px; padding-left: 5px; background: #2a2a2a; color: #d0d0d0; }
.dock-head > svg { width: 16px; height: 16px; }
.dock-head h2 { flex: 1; margin-left: 8px; font-size: 13px; font-weight: 700; color: #dcdcdc; white-space: nowrap; }
.hb { width: 25px; height: 22px; }
.hb svg { width: 16px; height: 16px; }

.tree { flex: 1; min-height: 0; background: #262626; }
.tree li { display: flex; align-items: center; height: 26px; }
.tree .ico { width: 16px; height: 16px; }
.package { padding-left: 5px; font-style: italic; font-weight: 600; color: #cfcfcf; }
.package .chev { width: 10px; height: 10px; margin-right: 12px; }
.package span { margin-left: 11px; }
.tree .graph-item { margin-left: 40px; padding-left: 7px; border: 1px solid #3f7fc8; background: #161616; color: #f0f0f0; }
.graph-item span { margin-left: 10px; }
.tree-foot { flex: none; display: flex; align-items: center; height: 31px; gap: 6px; border: solid #151515; border-width: 1px 0; }

.library { overflow: hidden; }
.lib-body { flex: 1; min-height: 0; display: flex; }
.lib-side { width: 152px; display: flex; flex-direction: column; border-right: 2px solid #141414; }
.lib-main { flex: 1; min-width: 0; display: flex; flex-direction: column; }
.toolbar.lined { border-bottom: 1px solid #0f0f0f; }
.lib-scroll { flex: 1; min-height: 0; display: flex; background: #232323; }
.lib-list { width: 140px; overflow: hidden; background: #323232; }
.lib-list li { display: flex; align-items: center; gap: 5px; height: 22px; padding-left: 3px; }
.lib-list svg { width: 18px; height: 18px; }
.lib-list .selected { padding-left: 2px; border: 1px solid #3f7fc8; background: #191919; color: #f0f0f0; }
.lib-list .gold { color: #f5bd1f; }
.lib-list .group { gap: 9px; padding-left: 7px; font-size: 11px; font-weight: 700; color: #fff; }
.lib-list .group svg { width: 10px; height: 10px; }
.lib-list .child { padding-left: 23px; }
.vscroll { flex: 1; }
.vthumb { width: 9px; height: 81px; margin-left: 1px; background: #404040; }
.lib-content { flex: 1; background: #262626; }
.search { width: 107px; height: 17px; padding: 0 2px; border: 0; border-radius: 4px; background: #272727; color: #c4c4c4; font: inherit; font-size: 11px; }
.search::placeholder { color: #858585; }
.hscroll { flex: none; height: 20px; padding: 2px 0; border-top: 1px solid #141414; }
.hthumb { width: 30%; height: 15px; margin-left: auto; background: #404040; }

/* graph editor */
.nodebar { flex: none; display: flex; align-items: center; height: 27px; gap: 1px; border-bottom: 1px solid #050505; white-space: nowrap; font-size: 11px; }
.nodebar .grip { margin: 1px 3px 1px 7px; }
.node { width: 24px; height: 24px; color: #e6e6e6; }
.node.plain { color: #c8c8c8; }
.node svg { width: 18px; height: 18px; }
.n-bitmap { background: #6f4d66; }
.n-blend { background: #c9c9cc; }
.n-blur { background: #8d8972; }
.n-shuffle { background: #403830; }
.n-curve { background: #4f7a1a; }
.n-dblur { background: #5f5c3c; }
.n-dwarp { background: #2f6770; }
.n-dist { background: #9dc257; }
.n-emboss { background: #645a90; }
.n-fx { background: #262626; }
.n-grad { background: #262f1a; }
.n-graddyn { background: #44702c; }
.n-gray { background: #848484; }
.n-hsl { background: #5f8452; }
.n-levels { background: #7ba878; }
.n-normal { background: #8080ff; }
.wheel { width: 16px; height: 16px; border-radius: 50%; background: radial-gradient(circle, #8080ff 3px, transparent 4px), conic-gradient(#c08cff, #ff58b0, #e060e0, #5050f0, #1890e8, #20d8e8, #80b8ff, #c08cff); }
.n-black { background: #0a0a0a; }
.node.n-black svg { width: 20px; height: 20px; }
.n-svg { background: #7d586b; }
.n-sharpen { background: #bda35f; }
.n-text { background: #a58594; font-size: 18px; }
.n-xform { background: #50618f; }
.n-uniform { background: #803542; }
.n-warp { background: #4c7a78; }
.n-in1 { background: #9090a3; }
.n-in2 { background: #a0a0ae; }
.n-in3 { background: #9b9ba6; }
.n-out { background: #7f7d96; margin-right: 2px; }
.drop { position: relative; display: flex; }
.drop::after {
  content: "";
  position: absolute;
  right: 5px;
  top: 7px;
  border: 3px solid transparent;
  border-top: 5px solid #c8c8c8;
  border-bottom: 0;
  pointer-events: none;
}
.drop select {
  appearance: none;
  width: 100%;
  height: 18px;
  padding: 0 3px;
  border: 1px solid #666;
  border-radius: 2px;
  background: #282828;
  color: #c8c8c8;
  font: inherit;
  font-size: 11px;
  line-height: 16px;
}
.small { width: 47px; }
.large { width: 122px; }
.chain { width: 18px; height: 22px; margin: 0 2px; }
.chain svg { width: 16px; height: 16px; }
.more { width: 28px; padding-left: 6px; font-size: 16px; }
.canvas {
  flex: 1;
  border-bottom: 1px solid #101010;
  background:
    linear-gradient(90deg, #363636 1px, transparent 1px) 0 0 / 96px 96px,
    linear-gradient(#363636 1px, transparent 1px) 0 0 / 96px 96px,
    linear-gradient(90deg, #3a3a3a 1px, transparent 1px) 0 0 / 32px 32px,
    linear-gradient(#3a3a3a 1px, transparent 1px) 0 0 / 32px 32px,
    #404040;
}

/* views */
.views { min-height: 0; display: grid; grid-template-columns: 1fr 1fr; gap: 2px; }
.view2d { box-shadow: -1px 0 #0d0d0d; }
.menu3d { flex: none; display: flex; gap: 12px; height: 27px; padding: 2px 0 0 6px; font-size: 11px; }
.stage { flex: 1; min-height: 0; display: flex; }
.strip { width: 29px; display: flex; flex-direction: column; padding-bottom: 1px; }
.grip-h { height: 4px; margin: 7px 0 6px; border: solid #1e1e1e; border-width: 1px 0; }
.viewport { flex: 1; min-width: 0; background: #1f1f1f; }
.viewport svg { width: 100%; height: 100%; }
.foot3d { flex: none; display: flex; align-items: center; height: 26px; }
.layers { position: relative; width: 25px; height: 22px; justify-content: flex-start; }
.layers svg { width: 16px; height: 18px; }
.layers .sub { width: 8px; height: 8px; right: 2px; }

.statusbar { flex: none; display: flex; align-items: center; justify-content: flex-end; gap: 4px; height: 26px; padding-right: 8px; font-size: 11px; }
.progress { width: 128px; height: 16px; background: #3b3b3b; border-radius: 1px; }
.version { margin-left: 20px; }
```
